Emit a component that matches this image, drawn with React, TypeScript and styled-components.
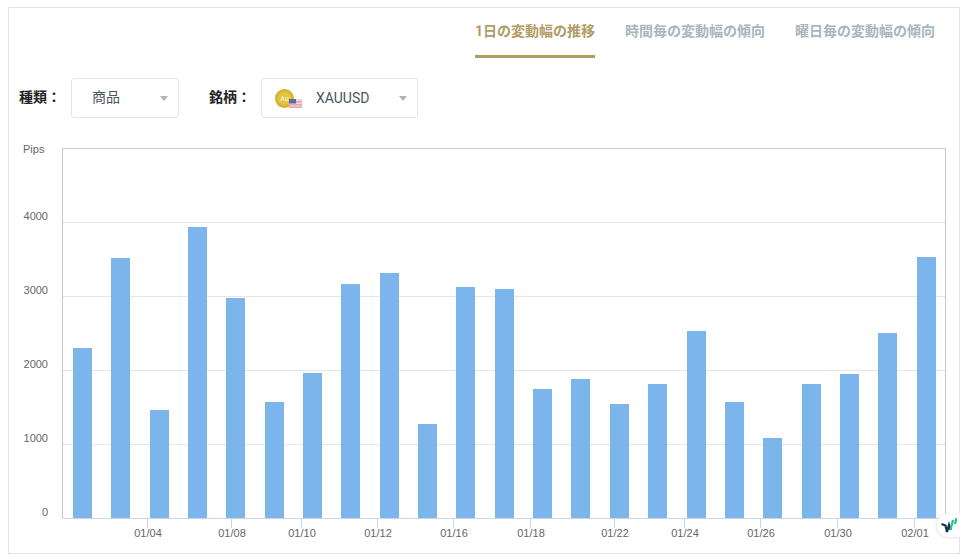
import React from "react"
import styled, { createGlobalStyle } from "styled-components"

const GlobalStyle = createGlobalStyle`
  html, body {
    margin: 0;
    padding: 0;
    background: #fff;
  }
  body {
    font-family: Roboto, "Noto Sans CJK JP", sans-serif;
  }
`

const Card = styled.div`
  box-sizing: border-box;
  width: 952px;
  height: 547px;
  margin: 7px 0 0 8px;
  border: 1px solid #dfe9e9;
  position: relative;
`

const Tabs = styled.div`
  display: flex;
  justify-content: flex-end;
  gap: 30px;
  padding-right: 24px;
  height: 50px;
`

const Tab = styled.div<{ $active?: boolean }>`
  box-sizing: border-box;
  height: 50px;
  padding-top: 12px;
  font-family: Roboto, "Noto Sans CJK JP", sans-serif;
  font-size: 14px;
  line-height: 22px;
  font-weight: 700;
  white-space: nowrap;
  color: ${p => (p.$active ? "#b09c64" : "#a9b6bd")};
  border-bottom: 3px solid ${p => (p.$active ? "#b09c64" : "transparent")};
`

const Filters = styled.div`
  display: flex;
  align-items: center;
  padding: 20px 0 0 10px;
`

const FilterLabel = styled.div<{ $gap?: number }>`
  font-family: Roboto, "Noto Sans CJK JP", sans-serif;
  font-size: 14px;
  font-weight: 700;
  color: #222;
  width: 52px;
  padding-bottom: 4px;
  white-space: nowrap;
  margin-left: ${p => p.$gap || 0}px;
`

const Select = styled.div<{ $width: number; $pad: number }>`
  box-sizing: border-box;
  width: ${p => p.$width}px;
  height: 40px;
  border: 1px solid #dfe9e9;
  border-radius: 3px;
  display: flex;
  align-items: center;
  padding-left: ${p => p.$pad}px;
  position: relative;
`

const SelectText = styled.span<{ $cjk?: boolean }>`
  font-family: Roboto, "Noto Sans CJK JP", sans-serif;
  font-size: 14px;
  color: #4a5560;
  margin-left: ${p => (p.$cjk ? -1 : 0)}px;
  padding-bottom: ${p => (p.$cjk ? 4 : 0)}px;
`

const Arrow = styled.span`
  position: absolute;
  right: 10px;
  top: 17px;
  width: 0;
  height: 0;
  border-left: 4px solid transparent;
  border-right: 4px solid transparent;
  border-top: 5px solid #a9b6bd;
`

const CoinWrap = styled.span`
  width: 27px;
  height: 22px;
  margin-right: 14px;
  flex: none;
`

const ChartWrap = styled.div`
  margin-top: 18px;
`

const Badge = styled.div`
  position: absolute;
  right: -2px;
  bottom: 16px;
  width: 24px;
  height: 24px;
  padding-left: 4px;
  box-sizing: border-box;
  background: #fff;
  border-radius: 12px 0 0 12px;
  box-shadow: -1px 1px 3px rgba(0, 0, 0, 0.1);
  display: flex;
  align-items: center;
`

const bars = [348, 258, 410, 227, 298, 402, 373, 284, 273, 424, 287, 289, 389, 379, 404, 384, 331, 402, 438, 384, 374, 333, 257]
const barX = [73, 111, 150, 188, 226, 265, 303, 341, 380, 418, 456, 495, 533, 571, 610, 648, 687, 725, 763, 802, 840, 878, 917]
const yLabels = [
  { t: "4000", y: 222 },
  { t: "3000", y: 296 },
  { t: "2000", y: 370 },
  { t: "1000", y: 444 },
]
const xLabels = [
  { t: "01/04", x: 147.5 },
  { t: "01/08", x: 231.5 },
  { t: "01/10", x: 301.5 },
  { t: "01/12", x: 377.5 },
  { t: "01/16", x: 453.5 },
  { t: "01/18", x: 530.5 },
  { t: "01/22", x: 614.5 },
  { t: "01/24", x: 684.5 },
  { t: "01/26", x: 760.5 },
  { t: "01/30", x: 837.5 },
  { t: "02/01", x: 914.5 },
]

// viewBox keeps page coordinates so the numbers read off the reference directly
function Chart() {
  const ox = 9
  const oy = 136
  const axisText = {
    fontFamily: "'Liberation Sans', Arial, sans-serif",
    fontSize: 11,
    fill: "#666",
  }
  return (
    <svg width="950" height="408" viewBox={`${ox} ${oy} 950 408`} style={{ display: "block" }}>
      <text x={23} y={153} {...axisText}>Pips</text>
      {yLabels.map(l => (
        <line key={l.t} x1={62} x2={945} y1={l.y + 0.5} y2={l.y + 0.5} stroke="#e6e6e6" />
      ))}
      {bars.map((top, i) => (
        <rect key={i} x={barX[i]} y={top} width={19} height={518 - top} fill="#7cb5ec" />
      ))}
      <path d="M62.5 518V148.5H945.5V518" fill="none" stroke="#c8c8c8" />
      <line x1={62} x2={946} y1={518.5} y2={518.5} stroke="#ccd6eb" />
      {xLabels.map(l => (
        <g key={l.t}>
          <line x1={l.x} x2={l.x} y1={518} y2={528} stroke="#ccd6eb" />
          <text x={l.x + 0.5} y={537} textAnchor="middle" {...axisText}>{l.t}</text>
        </g>
      ))}
      {yLabels.map(l => (
        <text key={l.t} x={48} y={l.y - 2} textAnchor="end" {...axisText}>{l.t}</text>
      ))}
      <text x={48} y={516} textAnchor="end" {...axisText}>0</text>
    </svg>
  )
}

function CoinIcon() {
  return (
    <svg width="27" height="22" viewBox="0 0 27 22">
      <circle cx="9.5" cy="11.5" r="9.5" fill="#d6b22e" />
      <circle cx="9.5" cy="11.5" r="7" fill="#e2c343" />
      <text x="9.5" y="14" textAnchor="middle" fontSize="7" fontWeight="700" fontFamily="Roboto, sans-serif" fill="#f6ecb8">Au</text>
      <rect x="14" y="12" width="13" height="9" fill="#f6d3d8" />
      <path d="M14 14h13v1.5H14zM14 17h13v1.5H14zM14 19.5h13V21H14z" fill="#e8a4ae" />
      <rect x="14" y="12" width="7" height="4.5" fill="#5a6a9c" />
    </svg>
  )
}

export default function App() {
  return (
    <>
      <GlobalStyle />
      <Card>
        <Tabs>
          <Tab $active>1日の変動幅の推移</Tab>
          <Tab>時間毎の変動幅の傾向</Tab>
          <Tab>曜日毎の変動幅の傾向</Tab>
        </Tabs>
        <Filters>
          <FilterLabel>種類：</FilterLabel>
          <Select $width={108} $pad={21}>
            <SelectText $cjk>商品</SelectText>
            <Arrow />
          </Select>
          <FilterLabel $gap={30}>銘柄：</FilterLabel>
          <Select $width={157} $pad={13}>
            <CoinWrap><CoinIcon /></CoinWrap>
            <SelectText>XAUUSD</SelectText>
            <Arrow />
          </Select>
        </Filters>
        <ChartWrap>
          <Chart />
        </ChartWrap>
        <Badge>
          <svg width="16" height="16" viewBox="0 0 16 16">
            <path d="M0.5 7L4.5 8.5L6 15L8 8L9.5 13" fill="none" stroke="#14304f" strokeWidth="2.2" />
            <path d="M9.5 13L12 3" fill="none" stroke="#23c38e" strokeWidth="2.2" />
            <path d="M14 7L15.5 1" fill="none" stroke="#23c38e" strokeWidth="2.2" />
          </svg>
        </Badge>
      </Card>
    </>
  )
}
